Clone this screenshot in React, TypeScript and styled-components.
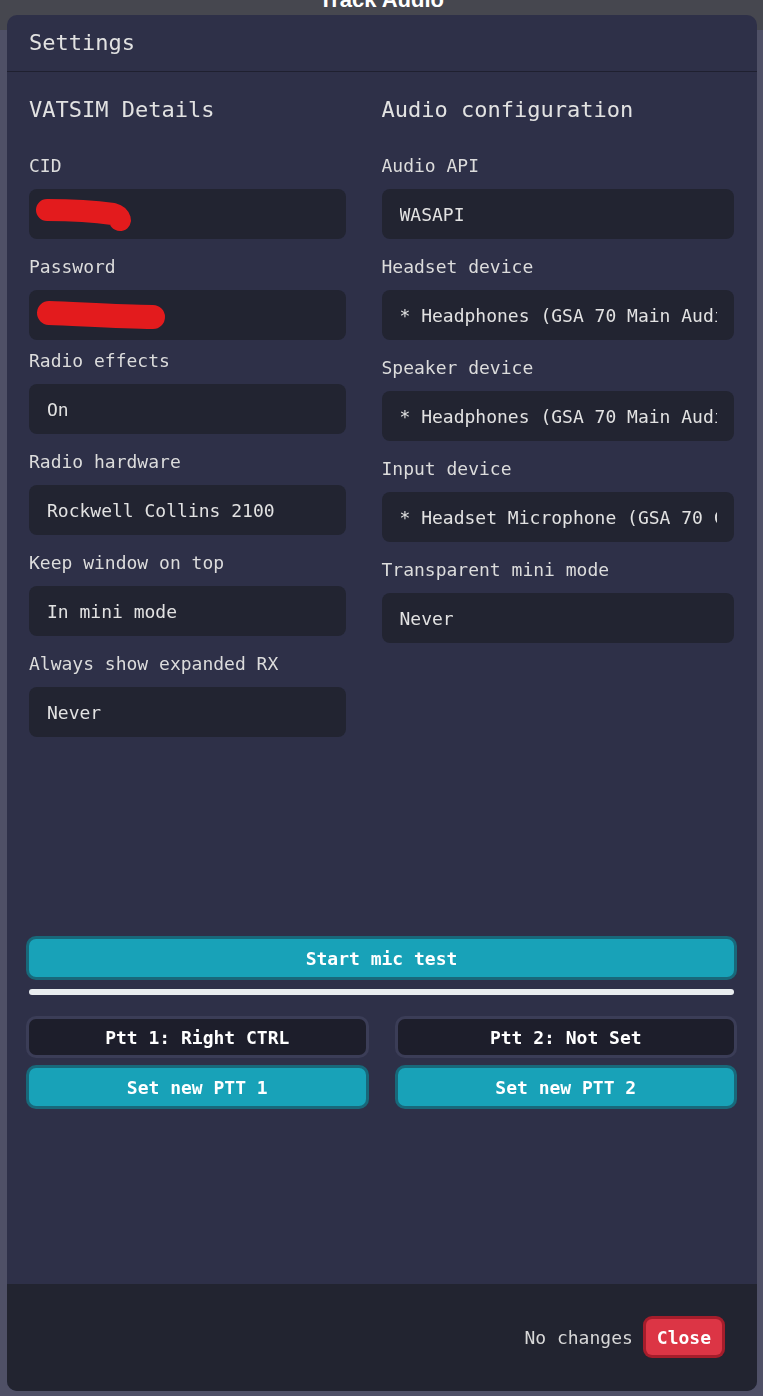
import React from "react";
import styled, { createGlobalStyle } from "styled-components";

const GlobalStyle = createGlobalStyle`
  html, body {
    margin: 0;
    padding: 0;
    background: #4f5066;
    font-family: "DejaVu Sans Mono", "Liberation Mono", monospace;
    color: #e0e0e0;
  }
  * { box-sizing: border-box; }
`;

const Page = styled.div`
  width: 100%;
  height: 1396px;
  overflow: hidden;
`;

const TitleBar = styled.div`
  height: 30px;
  background: #46474f;
  display: flex;
  justify-content: center;
  align-items: flex-start;
  overflow: hidden;
`;

const AppTitle = styled.span`
  font-family: "Liberation Sans", Arial, sans-serif;
  font-weight: 700;
  font-size: 22px;
  line-height: 22px;
  margin-top: -11px;
  color: #ffffff;
`;

const Dialog = styled.div`
  position: fixed;
  top: 15px;
  left: 7px;
  right: 6px;
  height: 1376px;
  background: #2e3048;
  border-radius: 10px;
  display: flex;
  flex-direction: column;
  overflow: hidden;
`;

const Header = styled.div`
  height: 57px;
  padding: 0 22px;
  display: flex;
  align-items: center;
  border-bottom: 1px solid #1f2030;
`;

const HeaderTitle = styled.h5`
  margin: 0;
  font-size: 22px;
  font-weight: 400;
  color: #e2e2e2;
  padding-bottom: 1px;
`;

const Body = styled.div`
  flex: 1;
  padding: 22px 23px 22px 22px;
  display: flex;
  flex-direction: column;
`;

const Columns = styled.div`
  display: grid;
  grid-template-columns: minmax(0, 1fr) minmax(0, 1fr);
`;

const Column = styled.div`
  display: flex;
  flex-direction: column;
  min-width: 0;
`;

const SectionTitle = styled.h4`
  margin: 0 0 29px 0;
  font-size: 22px;
  line-height: 31px;
  font-weight: 400;
  color: #e2e2e2;
`;

const Field = styled.div<{ $tight?: boolean }>`
  display: flex;
  flex-direction: column;
  margin-bottom: ${(p) => (p.$tight ? "9px" : "16px")};
`;

const Label = styled.label`
  font-size: 18px;
  line-height: 24px;
  margin-bottom: 11px;
  color: #dcdcdc;
  white-space: nowrap;
`;

const InputBox = styled.div<{ $narrow?: boolean }>`
  position: relative;
  width: ${(p) => (p.$narrow ? "90%" : "100%")};
  height: 50px;
  background: #222431;
  border-radius: 8px;
  padding: 0 17px 0 18px;
  display: flex;
  align-items: center;
`;

const Value = styled.span`
  display: block;
  overflow: hidden;
  white-space: nowrap;
  font-size: 18px;
  color: #e2e2e2;
`;

const Scribble = styled.svg`
  position: absolute;
  left: 0;
  top: 0;
  width: 100%;
  height: 100%;
  pointer-events: none;
`;

const MicSection = styled.div`
  margin-top: 186px;
  display: flex;
  flex-direction: column;
`;

const ActionButton = styled.button`
  height: 38px;
  width: 100%;
  border: none;
  border-radius: 7px;
  background: #18a2b8;
  box-shadow: 0 0 0 3px #18687a;
  color: #ffffff;
  font-family: "DejaVu Sans Mono", monospace;
  font-weight: 700;
  font-size: 18px;
  padding: 0;
  cursor: pointer;
`;

const LevelBar = styled.div`
  margin-top: 12px;
  height: 6px;
  border-radius: 3px;
  background: #e9ecef;
`;

const PttGrid = styled.div`
  margin-top: 24px;
  display: grid;
  grid-template-columns: minmax(0, 1fr) minmax(0, 1fr);
  column-gap: 32px;
  row-gap: 13px;
`;

const PttLabel = styled.div`
  height: 36px;
  border-radius: 7px;
  background: #1d1e2b;
  box-shadow: 0 0 0 3px #3b3d57;
  color: #ffffff;
  font-weight: 700;
  font-size: 18px;
  display: flex;
  align-items: center;
  justify-content: center;
`;

const Footer = styled.div`
  height: 107px;
  background: #222430;
  display: flex;
  justify-content: flex-end;
  align-items: center;
  gap: 13px;
  padding: 0 35px 1px 0;
`;

const Status = styled.span`
  font-size: 18px;
  color: #d8d8d8;
`;

const CloseButton = styled.button`
  height: 36px;
  padding: 0 11px;
  border: none;
  border-radius: 6px;
  background: #dc3545;
  box-shadow: 0 0 0 3px #a51d2b;
  color: #ffffff;
  font-family: "DejaVu Sans Mono", monospace;
  font-weight: 700;
  font-size: 18px;
  cursor: pointer;
`;

type FieldDef = { label: string; value?: string; redact?: "cid" | "pw"; tight?: boolean };

const left: FieldDef[] = [
  { label: "CID", redact: "cid" },
  { label: "Password", redact: "pw", tight: true },
  { label: "Radio effects", value: "On" },
  { label: "Radio hardware", value: "Rockwell Collins 2100" },
  { label: "Keep window on top", value: "In mini mode" },
  { label: "Always show expanded RX", value: "Never" },
];

const right: FieldDef[] = [
  { label: "Audio API", value: "WASAPI" },
  { label: "Headset device", value: "* Headphones (GSA 70 Main Audio)" },
  { label: "Speaker device", value: "* Headphones (GSA 70 Main Audio)" },
  { label: "Input device", value: "* Headset Microphone (GSA 70 Communication Audio)" },
  { label: "Transparent mini mode", value: "Never" },
];

const Redaction: React.FC<{ kind: "cid" | "pw" }> = ({ kind }) => (
  <Scribble viewBox="0 0 317 50" preserveAspectRatio="xMinYMid meet">
    {kind === "cid" ? (
      <path
        d="M18 21 C45 21 70 23 84 25 C88 26 90 28 91 31"
        stroke="#e31b1d"
        strokeWidth="22"
        strokeLinecap="round"
        fill="none"
      />
    ) : (
      <path
        d="M20 23 C50 24 90 27 124 27"
        stroke="#e31b1d"
        strokeWidth="24"
        strokeLinecap="round"
        fill="none"
      />
    )}
  </Scribble>
);

const FieldList: React.FC<{ items: FieldDef[]; narrow?: boolean }> = ({ items, narrow }) => (
  <>
    {items.map((f) => (
      <Field key={f.label} $tight={f.tight}>
        <Label>{f.label}</Label>
        <InputBox $narrow={narrow}>
          {f.redact ? <Redaction kind={f.redact} /> : <Value>{f.value}</Value>}
        </InputBox>
      </Field>
    ))}
  </>
);

export default function App() {
  return (
    <Page>
      <GlobalStyle />
      <TitleBar>
        <AppTitle>Track Audio</AppTitle>
      </TitleBar>
      <Dialog>
        <Header>
          <HeaderTitle>Settings</HeaderTitle>
        </Header>
        <Body>
          <Columns>
            <Column>
              <SectionTitle>VATSIM Details</SectionTitle>
              <FieldList items={left} narrow />
            </Column>
            <Column>
              <SectionTitle>Audio configuration</SectionTitle>
              <FieldList items={right} />
            </Column>
          </Columns>
          <MicSection>
            <ActionButton>Start mic test</ActionButton>
            <LevelBar />
            <PttGrid>
              <PttLabel>Ptt 1: Right CTRL</PttLabel>
              <PttLabel>Ptt 2: Not Set</PttLabel>
              <ActionButton>Set new PTT 1</ActionButton>
              <ActionButton>Set new PTT 2</ActionButton>
            </PttGrid>
          </MicSection>
        </Body>
        <Footer>
          <Status>No changes</Status>
          <CloseButton>Close</CloseButton>
        </Footer>
      </Dialog>
    </Page>
  );
}
